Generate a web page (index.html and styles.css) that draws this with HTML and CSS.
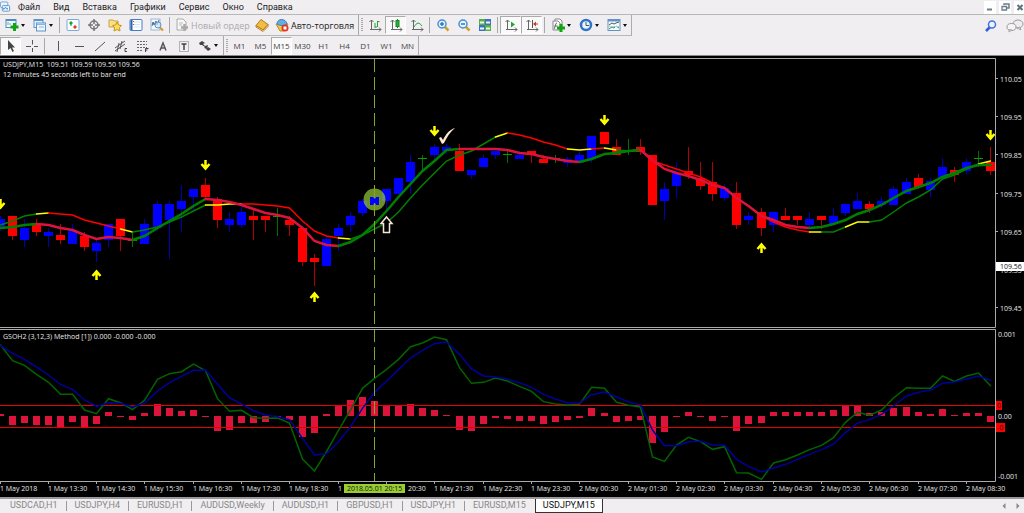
FILE: index.html
```html
<!DOCTYPE html>

<html lang="ru">
	<head>
		<meta charset="utf-8" />
		<title>USDJPY,M15</title>
		<link rel="stylesheet" href="styles.css">
	</head>

	<body>
		<header class="menubar">
			<svg class="logo" viewBox="0 0 12 12"><rect x="0.500" y="0.500" width="8" height="6" rx="1" fill="#eaf4fd" stroke="#6da3d8"/><rect x="2.500" y="4.500" width="8" height="6" rx="1" fill="#f6fbff" stroke="#4d8dcc"/><path d="M4 9V7l1 1 1-2 1 2 1-1v2" fill="none" stroke="#4d8dcc"/></svg>
			<nav>
				<button>Файл</button>
				<button>Вид</button>
				<button>Вставка</button>
				<button>Графики</button>
				<button>Сервис</button>
				<button>Окно</button>
				<button>Справка</button>
			</nav>
			<div class="window-buttons">
				<button aria-label="Свернуть"><svg viewBox="0 0 12 12"><path d="M3 8.500h5" stroke="#6b7d8c" stroke-width="2"/></svg></button>
				<button aria-label="Восстановить"><svg viewBox="0 0 12 12"><path d="M5 4V3h5v4H8" fill="none" stroke="#6b7d8c" stroke-width="1.500"/><path d="M3 5.500h4.500v3.500H3z" fill="none" stroke="#6b7d8c" stroke-width="1.300"/></svg></button>
				<button aria-label="Закрыть"><svg viewBox="0 0 12 12"><path d="M3.500 4l5 5M8.500 4l-5 5" stroke="#5f707e" stroke-width="2"/></svg></button>
			</div>
		</header>

		<div class="toolrow">
			<div class="toolbar">
				<button class="drop" aria-label="Новый график"><svg viewBox="0 0 14 14"><rect x="1" y="1.500" width="10" height="8" fill="#f4faff" stroke="#4f8ec4"/><path d="M1 2h10" stroke="#4f8ec4" stroke-width="2"/><path d="M3 4v3M5 5v2" stroke="#7a9"/><path d="M9.500 5v8M5.500 9h8" stroke="#11a516" stroke-width="3"/></svg><i></i></button>
				<button class="drop" aria-label="Профили"><svg viewBox="0 0 14 14"><rect x="1" y="1.500" width="9" height="8" fill="#e6f1fb" stroke="#5e95c8"/><path d="M1 2h9" stroke="#5e95c8" stroke-width="2"/><rect x="3.500" y="5" width="9" height="8" fill="#eef6fd" stroke="#5e95c8"/><path d="M4 6.500h9M6 9h5" stroke="#8ab4dc"/></svg><i></i></button>
				<span class="sep"></span>
				<button aria-label="Обзор рынка"><svg viewBox="0 0 14 14"><rect x="1" y="1.500" width="12" height="11" rx="1" fill="#fbfdff" stroke="#74abdb"/><path d="M5 3l2 2-2 2-2-2z" fill="#18a32a"/><path d="M5 5v3" stroke="#18a32a"/><path d="M9 7l2 2-2 2-2-2z" fill="#e5331f"/></svg></button>
				<button aria-label="Перекрестие"><svg viewBox="0 0 14 14"><circle cx="7" cy="7" r="4" fill="none" stroke="#777" stroke-width="1.500"/><path d="M7 1v5M7 8v5M1 7h5M8 7h5" stroke="#777" stroke-width="1.500"/></svg></button>
				<button aria-label="Навигатор"><svg viewBox="0 0 14 14"><path d="M1 2h4l1 1h4v6H1z" fill="#f9e08a" stroke="#cda434"/><path d="M9 4l1.500 3 3 .500-2 2 .500 3.500-3-1.500L6 13l.500-3.500-2-2 3-.500z" fill="#ffdc52" stroke="#c0962a"/></svg></button>
				<button aria-label="Терминал"><svg viewBox="0 0 14 14"><rect x="1" y="1.500" width="12" height="11" rx="1" fill="#fff" stroke="#3f7fc1"/><path d="M2.500 2v10" stroke="#2868b5" stroke-width="2"/><path d="M5 4h6M5 6.500h6M5 9h6" stroke="#d6e3f4"/><path d="M4.500 3v1M4.500 6v1" stroke="#e5331f"/></svg></button>
				<button aria-label="Тестер стратегий"><svg viewBox="0 0 14 14"><rect x="1" y="1" width="9" height="11" fill="#f3f8fc" stroke="#9bb8d3"/><path d="M2 8l1-4 1 3 2-4 1 4 2-5" fill="none" stroke="#456c97"/><circle cx="8" cy="7" r="3" fill="#cfe5f8" fill-opacity=".7" stroke="#5b92c7"/><path d="M10 9.500l3 3" stroke="#d19a26" stroke-width="2"/></svg></button>
				<span class="sep"></span>
				<button class="label off order" disabled><svg viewBox="0 0 14 14"><path d="M2 1h6l3 3v8H2z" fill="#f7f7f7" stroke="#aaa"/><path d="M4 5h4M4 7h3" stroke="#bbb"/><path d="M9.500 6v7M6 9.500h7" stroke="#a9a9a9" stroke-width="2.500"/></svg>Новый ордер</button>
				<button aria-label="MetaEditor"><svg viewBox="0 0 14 14"><path d="M6 1.500l7 5-5 5.500-7-4.500z" fill="#f3bd45" stroke="#b37a17"/><path d="M1 7.500l7 4.500 5-5.500v2L8 13.500 1 9z" fill="#fff2c4" stroke="#b37a17"/></svg></button>
				<button class="label auto"><svg viewBox="0 0 14 14"><path d="M1 6h12l-4 7H5z" fill="#f4c541" stroke="#bd8c1f"/><path d="M2 6c0-6 9-6 10 0-3 2-7 2-10 0z" fill="#65aee5" stroke="#3b82bd"/><circle cx="10" cy="10" r="3.500" fill="#e33322"/><rect x="8.500" y="8.500" width="3" height="3" fill="#fff"/></svg>Авто-торговля</button>
				<span class="edge"></span>
				<span class="grip"></span>
				<button aria-label="Бары"><svg viewBox="0 0 14 14"><path d="M3.500 12V2M1.500 4l2-2 2 2M2 11.500h11M11 9.500l2 2-2 2" fill="none" stroke="#666"/><path d="M7 10V5M9.500 9V3M9.500 3.500h2M7 9h2" stroke="#24a436"/></svg></button>
				<button class="pressed" aria-label="Свечи"><svg viewBox="0 0 14 14"><path d="M3.500 12V2M1.500 4l2-2 2 2M2 11.500h11M11 9.500l2 2-2 2" fill="none" stroke="#666"/><path d="M8.500 1v9" stroke="#158a25"/><rect x="7" y="2.500" width="3" height="6" fill="#26b33a" stroke="#158a25"/></svg></button>
				<button aria-label="Линия"><svg viewBox="0 0 14 14"><path d="M3.500 12V2M1.500 4l2-2 2 2M2 11.500h11M11 9.500l2 2-2 2" fill="none" stroke="#666"/><path d="M4 9c3-5 5-5 8-1" fill="none" stroke="#24a436"/></svg></button>
				<span class="sep"></span>
				<button aria-label="Увеличить"><svg viewBox="0 0 14 14"><path d="M8.500 8.500l4 4" stroke="#d4a02c" stroke-width="2.500"/><circle cx="6" cy="6" r="4" fill="#e5f3fd" stroke="#4a8fcf" stroke-width="1.500"/><path d="M4 6h4M6 4v4" stroke="#3278bc" stroke-width="1.500"/></svg></button>
				<button aria-label="Уменьшить"><svg viewBox="0 0 14 14"><path d="M8.500 8.500l4 4" stroke="#d4a02c" stroke-width="2.500"/><circle cx="6" cy="6" r="4" fill="#e5f3fd" stroke="#4a8fcf" stroke-width="1.500"/><path d="M4 6h4" stroke="#3278bc" stroke-width="1.500"/></svg></button>
				<button aria-label="Упорядочить окна"><svg viewBox="0 0 14 14"><path d="M1 1h6v6H1zM7 7h6v6H7z" fill="#55b23b"/><path d="M7 1h6v6H7zM1 7h6v6H1z" fill="#3f70c0"/><path d="M2 3.500h4v2H2zM8 3.500h4v2H8zM2 9.500h4v2H2zM8 9.500h4v2H8z" fill="#eef6ff"/></svg></button>
				<span class="sep"></span>
				<button class="pressed" aria-label="Автопрокрутка"><svg viewBox="0 0 14 14"><path d="M3.500 12V2M1.500 4l2-2 2 2M2 11.500h11M11 9.500l2 2-2 2" fill="none" stroke="#666"/><path d="M7 3.500l4 3-4 3z" fill="#24a436"/></svg></button>
				<button class="pressed" aria-label="Сдвиг графика"><svg viewBox="0 0 14 14"><path d="M3.500 12V2M1.500 4l2-2 2 2M2 11.500h11M11 9.500l2 2-2 2" fill="none" stroke="#666"/><path d="M7.500 2v8" stroke="#555"/><path d="M8 6l3-2.500v2h2v1h-2v2z" fill="#b8452d"/></svg></button>
				<span class="sep"></span>
				<button class="drop" aria-label="Индикаторы"><svg viewBox="0 0 14 14"><path d="M4 1h5l2 2v7H4z" fill="#fff" stroke="#888"/><path d="M2 3h5l2 2v7H2z" fill="#fafafa" stroke="#888"/><path d="M6 5c-2 0-2 6-3 6M3.500 8h3" fill="none" stroke="#666"/><path d="M10 6v8M6 10h8" stroke="#11a516" stroke-width="3"/></svg><i></i></button>
				<button class="drop" aria-label="Периоды"><svg viewBox="0 0 14 14"><circle cx="7" cy="7" r="5" fill="#eaf4fd" stroke="#2f75c4" stroke-width="2.500"/><path d="M7 4v3.500h3" fill="none" stroke="#456"/></svg><i></i></button>
				<button class="drop" aria-label="Шаблоны"><svg viewBox="0 0 14 14"><rect x="1" y="1.500" width="12" height="11" fill="#f5faff" stroke="#5e95c8"/><path d="M1 2.500h12" stroke="#5e95c8" stroke-width="2"/><path d="M2 7l3-2 2 1 2-1 3-1" fill="none" stroke="#555"/><path d="M2 11l3-2 2 1 2-2 3 2" fill="none" stroke="#2f9b46"/><path d="M2 8.500h10" stroke="#b7cde2"/></svg><i></i></button>
			</div>
			<div class="search">
				<button aria-label="Поиск"><svg viewBox="0 0 14 14"><path d="M6 8l-4 4" stroke="#2b5fd0" stroke-width="2.500"/><circle cx="8" cy="5.500" r="3.500" fill="#eef4ff" stroke="#3e74dd" stroke-width="1.500"/></svg></button>
				<button class="chat" aria-label="Чат"><svg viewBox="0 0 18 14"><ellipse cx="12" cy="5" rx="5" ry="4" fill="#eee" stroke="#999"/><path d="M14 8l1 3-4-2z" fill="#ddd" stroke="#aaa"/><ellipse cx="5.500" cy="8" rx="4.500" ry="3.500" fill="#f5f5f5" stroke="#999"/><path d="M3 10.500v2.500l3-2z" fill="#ddd" stroke="#aaa"/></svg></button>
			</div>
		</div>

		<div class="toolrow second">
			<div class="toolbar">
				<button class="pressed" aria-label="Курсор"><svg viewBox="0 0 14 14"><path d="M4 1v10l2.500-2 2 4 1.500-1-2-3.500h3z" fill="#444"/></svg></button>
				<button aria-label="Крест"><svg viewBox="0 0 14 14"><path d="M7.500 1v4.500M7.500 9V13M1 7.500h5M9 7.500h4" stroke="#555"/></svg></button>
				<span class="sep"></span>
				<button aria-label="Вертикальная линия"><svg viewBox="0 0 14 14"><path d="M7.500 2v10" stroke="#555"/></svg></button>
				<button aria-label="Горизонтальная линия"><svg viewBox="0 0 14 14"><path d="M3 7.500h9" stroke="#555"/></svg></button>
				<button aria-label="Трендовая линия"><svg viewBox="0 0 14 14"><path d="M2 12L12 3" stroke="#555"/></svg></button>
				<button aria-label="Канал"><svg viewBox="0 0 14 14"><path d="M1 9l10-7M1 12l10-7M3 13l2-9M6 10l2-8" stroke="#555"/><path d="M13 9.500h-2v3h2" fill="none" stroke="#444"/></svg></button>
				<button aria-label="Фибоначчи"><svg viewBox="0 0 14 14"><path d="M2 2.500h10M2 5.500h10M2 8.500h10M2 11.500h6" stroke="#666" stroke-dasharray="2 1"/><path d="M10.500 13v-3.500h3M10.500 11h2" fill="none" stroke="#444"/></svg></button>
				<button aria-label="Текст"><svg viewBox="0 0 14 14"><path d="M4 11.500L7 4l3 7.500M5 9h4" fill="none" stroke="#555" stroke-width="1.500"/></svg></button>
				<button aria-label="Метка"><svg viewBox="0 0 14 14"><rect x="2.500" y="2.500" width="9" height="10" fill="none" stroke="#777" stroke-dasharray="1 1"/><path d="M4.500 5h5M7 5v6" stroke="#444" stroke-width="1.500"/></svg></button>
				<button class="drop" aria-label="Стрелки"><svg viewBox="0 0 14 14"><path d="M1 4l3-2 3 2-2 1 2 2 3-1-1 4-3-1 1-1-3-2-2 0z" fill="#444"/><path d="M10 8l3 2-3 2-2-2z" fill="#444"/></svg><i></i></button>
				<span class="edge"></span>
				<span class="grip"></span>
				<button>M1</button>
				<button>M5</button>
				<button class="pressed">M15</button>
				<button>M30</button>
				<button>H1</button>
				<button>H4</button>
				<button>D1</button>
				<button>W1</button>
				<button>MN</button>
			</div>
		</div>

		<main>
			<svg id="chart" viewBox="0 56 1024 441">
				<g id="candles"></g>
				<g id="slow" class="slow"></g>
				<g id="fast" class="fast"></g>
				<g id="signals" class="signal"></g>

				<g id="bars" class="bars"></g>
				<rect class="level" x="0" y="405" width="996" height="1"/>
				<rect class="level" x="0" y="427" width="996" height="1"/>
				<g id="osc" class="osc"></g>

				<!-- entry point -->
				<circle class="spot" cx="374.500" cy="199.500" r="11"/>
				<path d="M370 197h3l2 2 1-2h3v8h-3l-1-2-2 2h-3z" fill="#00f"/>
				<path class="cross" d="M374.500 59V481"/>
				<path d="M386.500 217l5.500 6.500h-2.500v9h-6v-9H381z" fill="#000" stroke="#f3e6d2" stroke-width="1.500"/>
				<path d="M439 138l2-1 2 3c3-6 6-10 12-12-5 4-8 9-11 15l-2 1z" fill="#fbead0"/>

				<!-- frames -->
				<path class="frame" d="M0 58.500H995.500V327.500H0M0 329.500H995.500V481.500H0"/>
				<g id="prices"></g>
				<g id="times"></g>

				<text x="3" y="67">USDJPY,M15&#160; 109.51 109.59 109.50 109.56</text>
				<text x="3" y="77">12 minutes 45 seconds left to bar end</text>
				<text x="3" y="339">GSOH2 (3,12,3) Method [1]) 0.000 -0.000 -0.000</text>

				<rect x="996" y="262" width="28" height="9" fill="#fff"/>
				<text class="dark" x="1000" y="269">109.56</text>
				<text x="998" y="337">0.001</text>
				<text x="998" y="419">0.00</text>
				<text x="998" y="479">-0.001</text>
				<rect x="996" y="401" width="6" height="9" fill="#f00"/>
				<text class="dark" x="997" y="408">0</text>
				<rect x="996" y="423" width="9" height="9" fill="#f00"/>
				<text class="dark" x="997" y="430">-0</text>
				<rect x="344" y="484" width="61" height="9" fill="#9acd32"/>
				<text class="dark" x="347" y="491">2018.05.01 20:15</text>
			</svg>
		</main>

		<footer class="tabs">
			<a href="#">USDCAD,H1</a>
			<a href="#">USDJPY,H4</a>
			<a href="#">EURUSD,H1</a>
			<a href="#">AUDUSD,Weekly</a>
			<a href="#">AUDUSD,H1</a>
			<a href="#">GBPUSD,H1</a>
			<a href="#">USDJPY,H1</a>
			<a href="#">EURUSD,M15</a>
			<a href="#" class="active">USDJPY,M15</a>
			<div class="scroll">
				<button aria-label="Назад"><svg viewBox="0 0 6 6"><path d="M4.500 0v6L1.500 3z" fill="#888"/></svg></button>
				<button aria-label="Вперёд"><svg viewBox="0 0 6 6"><path d="M1.500 0v6l3-3z" fill="#888"/></svg></button>
			</div>
		</footer>

		<script src="chart.js"></script>
	</body>
</html>
```
FILE: styles.css
```css
body{
	margin: 0;
	background-color: #f0eef1;
	font-family: "Open Sans", "Noto Sans", sans-serif;
	font-size: 9px;
	color: #222;
}

button{
	border: 0;
	margin: 0;
	padding: 0;
	background: none;
	font: inherit;
	color: inherit;
	box-sizing: border-box;
}

/* menu */
.menubar{
	display: flex;
	align-items: center;
	height: 14px;
	border-bottom: 1px solid #b5b8b3;
	font-family: Roboto, "Open Sans", sans-serif;
}

.menubar nav{
	display: flex;
	flex: 1;
	padding-left: 1px;
}

.menubar nav button{
	padding: 0 7px 0 6px;
	line-height: 14px;
}

.logo{
	width: 11px;
	height: 12px;
}

.window-buttons{
	display: flex;
	gap: 3px;
}

.window-buttons button{
	background-color: #fff;
	width: 12px;
	height: 13px;
}

.window-buttons button:last-child{
	width: 10px;
}

.window-buttons svg{
	display: block;
	width: 12px;
	height: 12px;
}

/* toolbars */
.toolrow{
	display: flex;
	justify-content: space-between;
	height: 21px;
}

.toolrow.second{
	height: 19px;
	border-bottom: 1px solid #888;
}

.toolbar{
	display: flex;
	align-items: center;
	box-sizing: border-box;
	padding-left: 1px;
	border-right: 1px solid #aaada8;
	border-bottom: 1px solid #b5b8b3;
}

.second .toolbar{
	padding-left: 0;
	border-bottom: 0;
}

.toolbar button{
	display: flex;
	align-items: center;
	justify-content: center;
	width: 21px;
	height: 18px;
	color: #444;
	font-size: 8px;
}

.toolbar svg, .search svg{
	display: block;
	flex: none;
	width: 14px;
	height: 14px;
}

.toolbar .drop{
	width: 28px;
	gap: 2px;
}

.drop i{
	border: 2px solid transparent;
	border-top: 3px solid #111;
	border-bottom: 0;
}

.toolbar .label{
	justify-content: flex-start;
	gap: 2px;
	padding-left: 3px;
	font-size: 9px;
	color: #222;
}

.toolbar .order{
	width: 79px;
}

.toolbar .auto{
	width: 85px;
}

.toolbar .off{
	color: #aaa;
}

.toolbar .pressed{
	background-color: #f9f9f9;
	border: 1px solid #fff;
	border-top-color: #aaa;
	border-left-color: #aaa;
}

.sep{
	width: 1px;
	height: 16px;
	margin: 0 2px;
	background-color: #a8a8a8;
}

.edge{
	width: 1px;
	align-self: stretch;
	margin: 0 1px;
	background-color: #a8a8a8;
}

.grip{
	width: 2px;
	height: 14px;
	margin: 0 1px;
	background: repeating-linear-gradient(#aaa 0 1px, #eee 1px 2px);
}

.search{
	display: flex;
	align-items: center;
	gap: 8px;
}

.search .chat svg{
	width: 18px;
}

/* chart */
main{
	background-color: #000;
	border-bottom: 2px solid #999;
}

#chart{
	display: block;
	width: 100%;
}

#chart text{
	fill: #e8e8e8;
	font-size: 7px;
}

#chart text.dark{
	fill: #111;
}

.up{
	fill: #00f;
}

.down{
	fill: #f00;
}

.flat{
	fill: #00a000;
}

.wick{
	opacity: 0.7;
}

.slow, .fast, .osc{
	fill: none;
	stroke-linecap: round;
}

.slow, .osc{
	stroke-width: 1.5;
}

.fast{
	stroke-width: 2.5;
}

.signal{
	fill: none;
	stroke: #ff0;
	stroke-width: 2.5;
}

.bars{
	fill: #dc143c;
}

.level{
	fill: #e60000;
}

.spot{
	fill: #9acd32;
	opacity: 0.7;
}

.cross{
	stroke: #80a82a;
	stroke-dasharray: 13 5;
}

.frame, .tick{
	fill: none;
	stroke: #aaa;
}

/* chart tabs */
.tabs{
	display: flex;
	height: 14px;
	line-height: 13px;
	padding-left: 2px;
	font-family: Roboto, "Open Sans", sans-serif;
}

.tabs a{
	padding: 0 9px 0 8px;
	color: #888;
	text-decoration: none;
	background: linear-gradient(#999, #999) right 2px / 1px 10px no-repeat;
}

.tabs a:nth-child(8){
	background: none;
}

.tabs a.active{
	padding: 0 7px;
	background: #fff;
	color: #111;
	border: 1px solid #333;
	border-top: 0;
}

.scroll{
	display: flex;
	align-items: center;
	gap: 8px;
	margin-left: auto;
	padding-right: 3px;
}

.scroll svg{
	display: block;
	width: 6px;
	height: 6px;
}
```
FILE: chart.js
```js
const NS = 'http://www.w3.org/2000/svg';
const STEP = 12.08;

// direction, high, body top, body bottom, low
const candles = [
	['up',216,219,227,231], ['down',216,216,236,240], ['up',219,228,240,247], ['down',219,225,232,236],
	['up',228,232,236,247], ['down',224,235,240,244], ['up',224,231,244,244], ['down',232,236,247,251],
	['up',240,243,251,262], ['up',224,224,240,247], ['down',219,219,236,251], ['flat',231,240,241,247],
	['up',219,224,244,244], ['up',201,204,228,231], ['up',201,204,220,259], ['up',185,201,209,232],
	['up',189,189,197,211], ['down',178,185,197,199], ['down',197,199,220,228], ['up',212,219,225,232],
	['up',204,212,225,228], ['down',210,216,220,240], ['down',216,216,220,232], ['flat',208,216,217,236],
	['down',216,220,225,236], ['down',228,228,262,266], ['down',254,258,262,286], ['up',236,239,266,266],
	['up',224,228,236,251], ['up',212,216,225,232], ['up',199,201,213,216], ['up',197,197,205,205],
	['up',189,189,201,213], ['up',178,178,194,194], ['up',155,162,182,194], ['flat',155,158,159,171],
	['up',144,147,155,162], ['up',144,147,151,154], ['down',144,151,171,171], ['up',170,170,175,179],
	['up',155,158,167,167], ['up',151,151,155,159], ['flat',151,154,155,163], ['up',151,155,159,159],
	['down',151,151,155,163], ['down',155,159,163,163], ['flat',155,158,159,163], ['up',157,159,163,167],
	['up',151,155,163,163], ['up',136,136,159,163], ['down',132,132,144,144], ['down',139,147,155,155],
	['flat',139,150,151,155], ['down',139,147,152,155], ['down',155,155,205,205], ['up',182,189,201,220],
	['up',162,173,186,198], ['down',147,171,175,179], ['down',162,178,186,190], ['down',162,182,194,201],
	['up',184,188,198,201], ['down',182,193,225,229], ['up',212,216,220,225], ['down',208,212,228,236],
	['up',212,212,225,232], ['down',208,216,220,220], ['down',216,216,220,225], ['up',212,219,225,229],
	['down',216,216,220,229], ['up',208,216,224,224], ['up',204,204,213,216], ['up',193,201,209,209],
	['down',201,204,209,213], ['up',197,201,205,208], ['up',186,189,205,205], ['up',178,182,194,194],
	['down',174,178,187,189], ['up',178,181,190,197], ['up',158,167,178,181], ['down',167,170,175,182],
	['up',158,162,171,175], ['flat',151,158,159,167], ['down',147,162,171,175]
];

const fast = [228,227,225,224,225,228,230,235,239,237,238,240,236,228,221,214,206,199,200,202,205,209,213,215,218,228,241,245,246,242,235,224,211,197,184,171,161,150,149,149,149,149,150,153,154,157,159,161,162,159,154,153,151,150,160,169,173,176,180,185,188,198,206,216,220,225,227,228,227,224,220,214,210,205,198,191,187,183,177,173,168,165,165];
const slow = [225,221,216,214,213,214,215,220,223,226,229,232,230,227,222,217,211,205,205,204,204,204,205,206,208,221,231,236,238,239,235,229,223,212,198,185,173,161,155,151,144,137,133,135,138,142,145,149,150,149,148,150,151,150,161,165,169,173,177,183,188,198,206,216,222,227,230,232,232,232,227,222,222,220,212,203,197,190,179,175,169,164,161];

// colour changes: bar index, colour from that bar on
const fastColors = [[0,'green'],[3,'crimson'],[11,'green'],[17,'crimson'],[28,'green'],[38,'crimson'],[48,'green'],[53,'crimson'],[67,'green']];
const slowColors = [[0,'green'],[3,'yellow'],[4,'red'],[10,'yellow'],[11,'green'],[17,'yellow'],[20,'red'],[28,'yellow'],[29,'green'],[41,'yellow'],[42,'red'],[47,'yellow'],[49,'red'],[50,'yellow'],[51,'green'],[52,'yellow'],[53,'red'],[67,'yellow'],[68,'green'],[70,'yellow'],[72,'green'],[81,'yellow']];

// oscillator pane, three units to a pixel
const oscTop = 325;
const zero = 274;
const hist = [267,299,294,299,299,306,291,306,297,261,276,285,264,238,249,257,255,276,317,315,294,294,291,276,286,335,323,267,241,226,217,229,241,241,238,249,255,270,315,319,297,278,283,287,287,297,290,285,278,249,265,291,287,285,354,322,276,261,276,287,276,317,297,294,261,261,261,261,261,255,241,241,263,261,249,246,261,267,252,270,265,265,290];
const oscGreen = [60,107,121,148,172,208,208,255,266,221,233,254,226,163,146,140,117,137,221,259,256,278,280,279,294,402,438,380,316,255,190,160,133,103,65,54,36,44,128,175,172,159,168,184,199,230,237,240,238,187,190,232,241,246,396,409,360,337,350,373,365,443,444,463,414,404,390,374,361,338,292,262,271,255,219,188,190,190,153,169,153,144,182];
const oscBlue = [62,85,103,126,150,178,193,225,244,233,235,246,235,198,173,154,136,135,178,218,237,257,270,275,284,340,390,386,350,305,250,202,168,134,99,76,56,51,88,132,153,156,163,173,187,208,222,234,234,209,201,216,231,240,315,362,362,350,349,360,361,403,424,441,429,418,403,388,374,357,323,294,284,268,243,213,202,195,175,171,162,153,166];

// bar index, centre, 1 = points down
const signals = [[0,204,1],[8,275,-1],[17,165,1],[26,297,-1],[36,131,1],[50,120,1],[63,248,-1],[82,135,1]];

function add(id, name, attrs, text) {
	const el = document.createElementNS(NS, name);
	for (const key in attrs) el.setAttribute(key, attrs[key]);
	if (text) el.textContent = text;
	document.getElementById(id).appendChild(el);
}

function barX(i) {
	return Math.floor(i * STEP);
}

function line(id, values, from, to, color) {
	const points = [];
	for (let i = from; i <= to; i++) points.push(barX(i) + 0.5 + ',' + values[i]);
	add(id, 'polyline', { points: points.join(' '), stroke: color });
}

function coloredLine(id, values, changes) {
	changes.forEach(function (change, n) {
		const next = changes[n + 1];
		line(id, values, change[0], next ? next[0] : values.length - 1, change[1]);
	});
}

candles.forEach(function (c, i) {
	const x = barX(i);
	add('candles', 'rect', { class: c[0] + ' wick', x: x, y: c[1], width: 1, height: c[4] - c[1] });
	add('candles', 'rect', { class: c[0], x: x - 4, y: c[2], width: 9, height: c[3] - c[2] });
});

coloredLine('slow', slow, slowColors);
coloredLine('fast', fast, fastColors);

signals.forEach(function (s) {
	add('signals', 'path', {
		d: 'M0-5V4M-4-1L0 3.500L4-1',
		transform: 'translate(' + (barX(s[0]) + 0.5) + ' ' + s[1] + ') scale(1 ' + s[2] + ')'
	});
});

hist.forEach(function (v, i) {
	const top = Math.round(oscTop + Math.min(v, zero) / 3);
	const bottom = Math.round(oscTop + Math.max(v, zero) / 3);
	add('bars', 'rect', { x: barX(i) - 3, y: top, width: 7, height: Math.max(1, bottom - top) });
});

line('osc', oscGreen.map(v => oscTop + v / 3), 0, 82, '#006400');
line('osc', oscBlue.map(v => oscTop + v / 3), 0, 82, '#00009b');

['110.05', '109.95', '109.85', '109.75', '109.65', '109.55', '109.45'].forEach(function (price, i) {
	const y = Math.round(79 + i * 38.2);
	add('prices', 'path', { class: 'tick', d: 'M996 ' + (y - 0.5) + 'h2' });
	add('prices', 'text', { x: 1000, y: y + 3 }, price);
});

for (let i = 0; i <= 20; i++) {
	const x = barX(i * 4);
	const hour = (12 + i) % 24;
	let label = (i < 12 ? '1' : '2') + ' May ' + String(hour).padStart(2, '0') + ':30';
	let labelX = x;
	if (i === 0) label = '1 May 2018';
	// the crosshair date lies over these two
	if (i === 7) label = '1';
	if (i === 8) {
		label = '20:30';
		labelX = x + 22;
	}
	add('times', 'path', { class: 'tick', d: 'M' + (x + 0.5) + ' 481v3' });
	add('times', 'text', { x: labelX, y: 491 }, label);
}
```
